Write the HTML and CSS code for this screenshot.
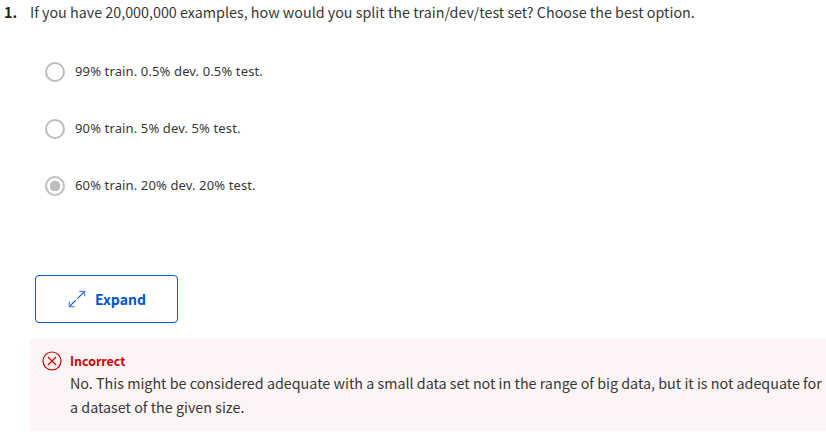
FILE: index.html
```html
<!DOCTYPE html>
<html lang="en">
<head>
<meta charset="utf-8">
<title>Quiz</title>
<link rel="stylesheet" href="styles.css">
</head>
<body>
<main class="quiz">
  <div class="question"><span class="number">1.</span><span class="prompt">If you have 20,000,000 examples, how would you split the train/dev/test set? Choose the best option.</span></div>
  <div class="options">
    <div class="option"><span class="radio"></span><span class="label">99% train. 0.5% dev. 0.5% test.</span></div>
    <div class="option"><span class="radio"></span><span class="label">90% train. 5% dev. 5% test.</span></div>
    <div class="option"><span class="radio checked"></span><span class="label">60% train. 20% dev. 20% test.</span></div>
  </div>
  <button class="expand" type="button">
    <svg class="arrows" viewBox="0 0 20 20"><path class="shaft" d="M10.500 9.500 18 2M8.500 11.500 2 18"/><path class="tip" d="M12.500 1.500h6v5.500M1.500 13v5.500h5.500"/></svg>
    <span>Expand</span>
  </button>
  <section class="feedback">
    <svg class="wrong" viewBox="0 0 20 20"><circle cx="10" cy="10" r="9"/><path d="m6 6 8 8M14 6l-8 8"/></svg>
    <div class="message">
      <div class="verdict">Incorrect</div>
      <p class="line">No. This might be considered adequate with a small data set not in the range of big data, but it is not adequate for</p>
      <p class="line">a dataset of the given size.</p>
    </div>
  </section>
</main>
</body>
</html>
```
FILE: styles.css
```css
* { box-sizing: border-box; }
body { margin: 0; background: #fff; color: #373737; font-family: "Noto Sans CJK SC", sans-serif; }
.quiz { height: 436px; overflow: hidden; }
.question { display: flex; height: 26px; padding-left: 4px; font-size: 14.320px; line-height: 24px; white-space: nowrap; }
.number { width: 26px; font-weight: 700; color: #1f1f1f; }
.options { padding: 17px 0 0 45px; }
.option { display: flex; align-items: center; height: 57px; font-family: "Noto Sans", sans-serif; font-size: 13px; white-space: nowrap; }
.label { margin-top: -2px; letter-spacing: 0.130px; }
.radio { width: 20px; height: 20px; margin-right: 10px; border: 2px solid #bdbdbd; border-radius: 50%; }
.checked { background: radial-gradient(circle, #bdbdbd 5px, #fff 5.500px); }
.expand { display: flex; align-items: center; width: 143px; height: 48px; margin: 61px 0 0 35px; padding: 0 0 0 32px; gap: 9px; border: 1px solid #0056d2; border-radius: 4px; background: #fff; color: #0056d2; font: 700 14px "Noto Sans CJK SC", sans-serif; }
.arrows { width: 18px; height: 18px; fill: none; stroke: currentColor; stroke-width: 1.300; }
.tip { stroke: #4c89df; }
.feedback { display: flex; height: 92px; margin: 16px 0 0 30px; padding: 12px 0 0 12px; background: #fdf5f5; }
.wrong { flex: none; width: 20px; height: 20px; margin-right: 8px; fill: none; stroke: #d30001; stroke-width: 1.200; }
.message { white-space: nowrap; }
.verdict { color: #d30001; font-size: 12.400px; font-weight: 700; line-height: 20px; }
.line { margin: 0; font-size: 14.320px; line-height: 24px; }
```
